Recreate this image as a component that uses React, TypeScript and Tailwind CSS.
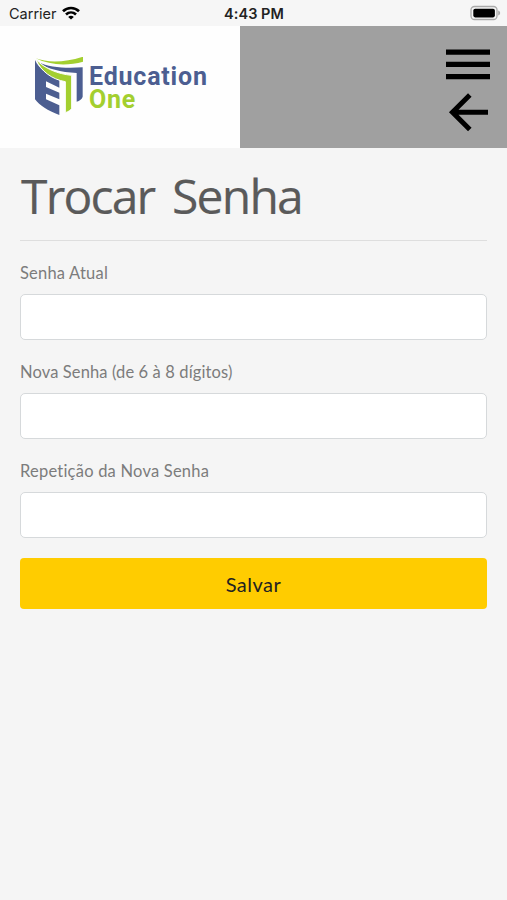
import React from 'react';

const campos = [
  { id: 'senhaAtual', label: 'Senha Atual', tracking: 'tracking-[0.2px]' },
  { id: 'novaSenha', label: 'Nova Senha (de 6 à 8 dígitos)', tracking: 'tracking-[0.12px]' },
  { id: 'repeticaoSenha', label: 'Repetição da Nova Senha', tracking: 'tracking-[0.22px]' },
];

const StatusBar = () => (
  <div className="grid h-[26px] grid-cols-3 items-center bg-[#f6f6f6] pl-[9px] pr-[6px] font-['Inter',sans-serif] text-[14px] text-[#222]">
    <div className="flex items-center gap-[5px] pt-[2px]">
      <span className="text-[14.5px] leading-none">Carrier</span>
      <svg className="-mt-[2px]" width="18" height="14" viewBox="0 0 18 14" fill="none" stroke="#000" strokeWidth="2.7">
        <path d="M1 5.2C5.5.9 12.5.9 17 5.2" />
        <path d="M4 8.5c2.9-2.7 7.1-2.7 10 0" />
        <path d="M9 13.6 6.2 10.9c1.6-1.5 4-1.5 5.6 0Z" fill="#000" stroke="none" />
      </svg>
    </div>
    <span className="pt-[2px] pr-[2px] text-center text-[14.5px] font-semibold leading-none tracking-[0.05px] whitespace-nowrap">4:43 PM</span>
    <svg className="justify-self-end" width="31" height="16" viewBox="0 0 31 16">
      <rect x="1" y="1.5" width="26" height="13" rx="3.5" fill="#f6f6f6" stroke="#aaa" strokeWidth="1.3" />
      <rect x="3.3" y="3.8" width="21.6" height="8.6" rx="1.8" fill="#000" />
      <path d="M28.2 5.5c2.6.8 2.6 4.2 0 5Z" fill="#aaa" />
    </svg>
  </div>
);

const Logo = () => (
  <div className="flex h-full w-[240px] items-start bg-[#fefefe] pl-[35px] pt-[31px]">
    <svg width="49" height="59" viewBox="15 13 147 177">
      {/* Capa e letra E */}
      <path d="M15 22c12 26 36 45 73 60v23L48 86v17l40 17v20l-40-17v17l40 18v29c-35-13-59-28-73-47Z" fill="#4c5e91" />
      {/* Folhas */}
      <path d="M17 17c36 14 92 12 142-5v15c-46 13-100 11-142-10Z" fill="#a3cf2f" />
      <path d="M25 25c32 15 82 19 133 15v88c-2 7-9 12-18 15V57C92 55 52 45 25 25Z" fill="#4c5e91" transform="translate(0 4)" />
      <path d="M18 20c25 28 66 44 107 48v99c-3 6-10 10-19 13V87C65 80 32 55 18 20Z" fill="#a3cf2f" stroke="#fefefe" strokeWidth="3" />
    </svg>
    <div className="ml-[5px] mt-[8px] font-['Roboto',sans-serif] text-[25px] font-bold leading-[23px] text-[#4c5e91]">
      <div className="tracking-[0.8px]">Education</div>
      <div className="tracking-[0.7px] text-[#a3cf2f]">One</div>
    </div>
  </div>
);

const Header = () => (
  <header className="flex h-[122px] justify-between bg-[#a0a0a0]">
    <Logo />
    <div className="flex flex-col items-end pr-[17px] pt-[23px]">
      <button aria-label="Menu">
        <svg width="44" height="31" viewBox="0 0 44 31" fill="#000">
          <path d="M0 .5h44v5.3H0zM0 12.8h44v5.3H0zM0 25h44v5.3H0z" />
        </svg>
      </button>
      <button aria-label="Voltar" className="mr-[2px] mt-[12px]">
        <svg width="41" height="41" viewBox="0 0 41 41" fill="none" stroke="#000" strokeWidth="5">
          <path d="M41 20.3H6M22.8 3l-17.3 17.3 17.3 17.3" />
        </svg>
      </button>
    </div>
  </header>
);

const App = () => {
  return (
    <div className="min-h-screen bg-[#f5f5f5]">
      <StatusBar />
      <Header />

      <main className="px-5">
        <h1 className="h-[93px] border-b border-[#dedede] pl-px pt-[16px] font-['Open_Sans',sans-serif] text-[48px] leading-[64px] tracking-[-1.8px] [word-spacing:7px] [-webkit-text-stroke:0.2px_#5a5a5a] whitespace-nowrap text-[#5a5a5a]">
          Trocar Senha
        </h1>

        <form className="pt-[20px] font-['Lato',sans-serif]">
          {campos.map((campo) => (
            <div key={campo.id} className="mb-[20px]">
              <label htmlFor={campo.id} className={`block h-[33px] text-[16.5px] leading-[25px] text-[#7c7c7c] ${campo.tracking}`}>
                {campo.label}
              </label>
              <input
                id={campo.id}
                type="password"
                className="block h-[46px] w-full rounded-[5px] border border-[#d6d9db] bg-white px-3 outline-none"
              />
            </div>
          ))}

          <button type="button" className="block h-[51px] w-full rounded-[4px] bg-[#ffcc00] text-[20px] tracking-[0.5px] text-[#222]">
            Salvar
          </button>
        </form>
      </main>
    </div>
  );
};

export default App;
